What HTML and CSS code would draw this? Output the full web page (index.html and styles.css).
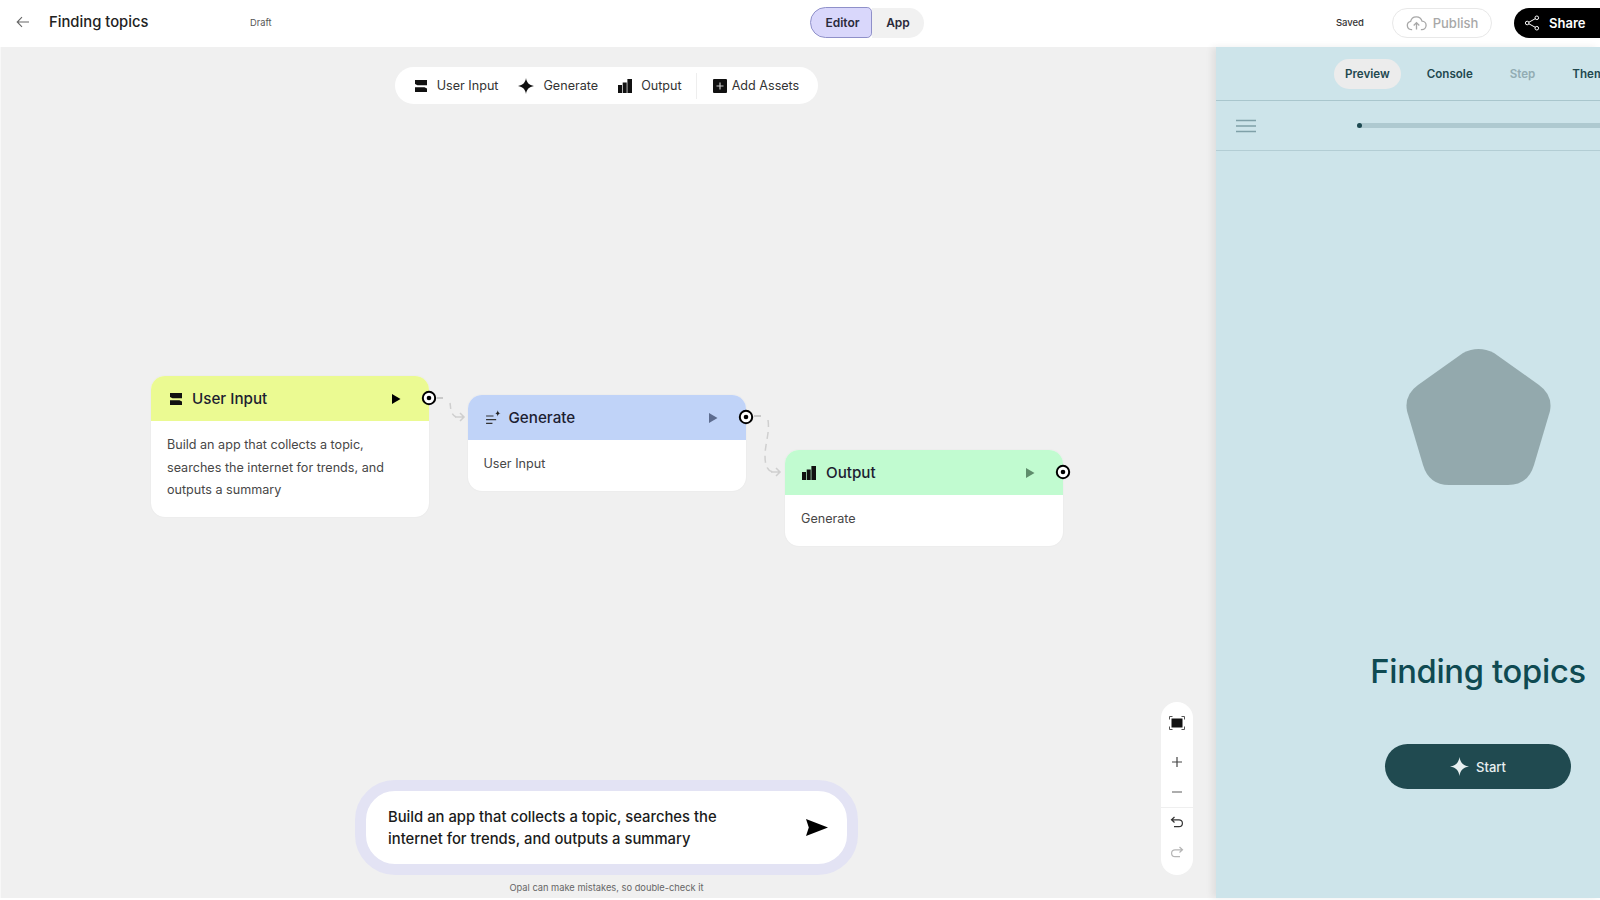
FILE: index.html
```html
<!DOCTYPE html>
<html lang="en">
<head>
<meta charset="utf-8">
<title>Finding topics</title>
<link rel="stylesheet" href="styles.css">
</head>
<body>
<svg class="defs" width="0" height="0" aria-hidden="true">
  <symbol id="i-input" viewBox="0 0 14 14"><path d="M1 1h12v5.200H3.500L1 5zM1 8.200h9.500L13 9.500V13H1z" fill="currentColor"/></symbol>
  <symbol id="i-star" viewBox="0 0 16 16"><path d="M8 0C8.700 4.600 11 7.200 16 8C11 8.800 8.700 11.400 8 16C7.300 11.400 5 8.800 0 8C5 7.200 7.300 4.600 8 0Z" fill="currentColor"/></symbol>
  <symbol id="i-output" viewBox="0 0 14 14"><path d="M0 6h4v8H0zM4.700 3.500h4V14h-4zM9.400 0H14v14H9.400z" fill="currentColor"/></symbol>
  <symbol id="i-play" viewBox="0 0 10 10"><path d="M1 0v10L9.500 5z" fill="currentColor"/></symbol>
  <symbol id="i-port" viewBox="0 0 16 16"><circle cx="8" cy="8" r="6.200" fill="#fff" stroke="#000" stroke-width="2"/><circle cx="8" cy="8" r="2.300" fill="#000"/></symbol>
</svg>

<header class="topbar">
  <div class="top-left">
    <svg class="back" viewBox="0 0 14 12" width="14" height="12"><path d="M13 6H1.500M6 1.200 1.200 6 6 10.800" fill="none" stroke="#666" stroke-width="1.100"/></svg>
    <span class="doc-title">Finding topics</span>
    <span class="draft">Draft</span>
  </div>
  <div class="mode-switch">
    <span class="mode mode-on">Editor</span>
    <span class="mode mode-off">App</span>
  </div>
  <div class="top-right">
    <span class="saved">Saved</span>
    <span class="publish">
      <svg viewBox="0 0 24 18" width="21" height="16"><path d="M7 16.500H6a4.700 4.700 0 0 1-.7-9.300 6.700 6.700 0 0 1 13-.3 4.800 4.800 0 0 1-.3 9.600h-1M12 16.500V9M8.800 11.800 12 8.600l3.200 3.200" fill="none" stroke="#a8a8a8" stroke-width="1.500"/></svg>
      Publish
    </span>
    <span class="share">
      <svg viewBox="0 0 16 16" width="16" height="16"><path d="M12.500 3 3.500 8l9 5" fill="none" stroke="#fff" stroke-width="1"/><circle cx="12.800" cy="2.800" r="1.800" fill="#000" stroke="#fff" stroke-width="1"/><circle cx="3.200" cy="8" r="1.800" fill="#000" stroke="#fff" stroke-width="1"/><circle cx="12.800" cy="13.200" r="1.800" fill="#000" stroke="#fff" stroke-width="1"/></svg>
      Share
    </span>
  </div>
</header>

<main class="workspace">
  <section class="canvas">
    <nav class="toolbar">
      <span class="tool"><svg class="tool-icon" width="14" height="14"><use href="#i-input"/></svg>User Input</span>
      <span class="tool"><svg class="tool-icon" width="16" height="16"><use href="#i-star"/></svg>Generate</span>
      <span class="tool"><svg class="tool-icon" width="14" height="14"><use href="#i-output"/></svg>Output</span>
      <span class="tool-sep"></span>
      <span class="tool tool-add"><svg class="tool-icon" viewBox="0 0 14 14" width="14" height="14"><rect width="14" height="14" rx="1" fill="#111"/><path d="M7 3.500v7M3.500 7h7" stroke="#ccc" stroke-width="1.200"/></svg>Add Assets</span>
    </nav>

    <svg class="edges" width="1213" height="851" viewBox="0 47 1213 851">
      <g fill="none" stroke="#cfcfcf" stroke-width="1.500">
        <path d="M437 398H443" stroke="#bdbdbd"/>
        <path d="M450 403C451 408 450 414 456 417" stroke-dasharray="6 5"/>
        <path d="M455 417H464M460 413l4 4-4 4"/>
        <path d="M754 416H761" stroke="#bdbdbd"/>
        <path d="M768 420C770 432 765 444 765 456C765 466 768 472 774 472" stroke-dasharray="7 5"/>
        <path d="M771 472H780M776 468l4 4-4 4"/>
      </g>
    </svg>

    <article class="node node-input">
      <div class="node-head head-input">
        <svg class="node-icon" width="14" height="14"><use href="#i-input"/></svg>
        <span class="node-name">User Input</span>
        <svg class="node-play play-black" width="10" height="10"><use href="#i-play"/></svg>
      </div>
      <p class="node-body">Build an app that collects a topic, searches the internet for trends, and outputs a summary</p>
      <svg class="port" width="16" height="16"><use href="#i-port"/></svg>
    </article>

    <article class="node node-generate">
      <div class="node-head head-generate">
        <svg class="node-icon icon-gen" viewBox="0 0 16 16" width="17" height="17"><path d="M1 7.500h7M1 11h9.500M1 14.500h6" stroke="#333" stroke-width="1.100" fill="none"/><path d="M12 2c.3 2 1 2.800 3 3-2 .3-2.700 1-3 3-.3-2-1-2.700-3-3 2-.2 2.700-1 3-3z" fill="#222"/></svg>
        <span class="node-name">Generate</span>
        <svg class="node-play play-blue" width="10" height="10"><use href="#i-play"/></svg>
      </div>
      <p class="node-body">User Input</p>
      <svg class="port" width="16" height="16"><use href="#i-port"/></svg>
    </article>

    <article class="node node-output">
      <div class="node-head head-output">
        <svg class="node-icon icon-out" width="14" height="14"><use href="#i-output"/></svg>
        <span class="node-name">Output</span>
        <svg class="node-play play-green" width="10" height="10"><use href="#i-play"/></svg>
      </div>
      <p class="node-body">Generate</p>
      <svg class="port" width="16" height="16"><use href="#i-port"/></svg>
    </article>

    <aside class="zoombar">
      <svg class="zb-frame" viewBox="0 0 16 14" width="16" height="14"><rect x="2.500" y="2.500" width="11" height="9" fill="#111"/><path d="M.5 3.500v-3h3M12.500.5h3v3M15.500 10.500v3h-3M3.500 13.500h-3v-3" fill="none" stroke="#555" stroke-width="1"/></svg>
      <svg class="zb-plus" viewBox="0 0 12 12" width="12" height="12"><path d="M6 1v10M1 6h10" stroke="#444" stroke-width="1.200"/></svg>
      <svg class="zb-minus" viewBox="0 0 12 12" width="12" height="12"><path d="M1 6h10" stroke="#777" stroke-width="1.200"/></svg>
      <span class="zb-sep"></span>
      <svg class="zb-undo" viewBox="0 0 14 12" width="14" height="12"><path d="M4.500 1 1.500 3.800l3 2.700M1.500 3.800h7.500a3.400 3.400 0 0 1 0 6.800H4" fill="none" stroke="#333" stroke-width="1.200"/></svg>
      <svg class="zb-redo" viewBox="0 0 14 12" width="14" height="12"><path d="M9.500 1l3 2.800-3 2.700M12.500 3.800H5a3.400 3.400 0 0 0 0 6.800h5" fill="none" stroke="#b5b5b5" stroke-width="1.200"/></svg>
    </aside>

    <div class="prompt-wrap">
      <div class="prompt">
        <p class="prompt-text">Build an app that collects a topic, searches the internet for trends, and outputs a summary</p>
        <svg class="send" viewBox="0 0 22 17" width="22" height="17"><path d="M0 0 22 8.500 0 17 2.800 8.500z" fill="#000"/></svg>
      </div>
      <p class="disclaimer">Opal can make mistakes, so double-check it</p>
    </div>
  </section>

  <aside class="panel">
    <div class="panel-inner">
      <nav class="tabs">
        <span class="tab tab-on">Preview</span>
        <span class="tab">Console</span>
        <span class="tab tab-dim">Step</span>
        <span class="tab">Theme</span>
      </nav>
      <div class="progress-row">
        <svg class="menu" viewBox="0 0 20 14" width="20" height="14"><path d="M0 1.500h20M0 7h20M0 12.500h20" stroke="#7fa0a8" stroke-width="1.300"/></svg>
        <div class="progress"><span class="progress-dot"></span></div>
      </div>
      <div class="splash">
        <svg class="shape" viewBox="0 0 145 136" width="145" height="136"><path d="M57 4Q72.500-4 88 4L133 36Q147 46 144 62L128 116Q122 136 102 136H43Q23 136 17 116L1 62Q-2 46 12 36Z" fill="#93a9ad"/></svg>
        <h1 class="splash-title">Finding topics</h1>
        <span class="start"><svg width="19" height="19"><use href="#i-star"/></svg>Start</span>
      </div>
    </div>
  </aside>
</main>
</body>
</html>
```
FILE: styles.css
```css
* { box-sizing: border-box; }
html, body { margin: 0; height: 100%; }
body {
  width: 1600px;
  height: 900px;
  overflow: hidden;
  display: flex;
  flex-direction: column;
  padding-bottom: 2px;
  background: #fff;
  color: #1f1f1f;
  font-family: Inter, "Liberation Sans", sans-serif;
}
.defs { position: absolute; }
p, h1 { margin: 0; }

/* top bar */
.topbar {
  flex: 0 0 47px;
  display: grid;
  grid-template-columns: 1fr auto 1fr;
  align-items: center;
  padding-bottom: 2px;
  background: #fff;
}
.top-left { display: flex; align-items: center; padding-left: 16px; }
.back { margin-top: -1px; }
.doc-title { margin-left: 19px; margin-top: -2px; font-size: 14.800px; font-weight: 500; color: #222; width: 201px; }
.draft { font-size: 9.300px; color: #555; }
.mode-switch { display: flex; align-items: center; margin-left: 134px; }
.mode { display: flex; align-items: center; justify-content: center; font-size: 12px; font-weight: 600; color: #2a2a3a; }
.mode-on {
  width: 62px; height: 31px;
  padding-left: 3px;
  background: #d9d7fb;
  border: 1px solid #8f90c9;
  border-radius: 16px 5px 5px 16px;
}
.mode-off {
  width: 52px; height: 30px;
  background: #f1f1f1;
  border-radius: 0 15px 15px 0;
}
.top-right { display: flex; align-items: center; justify-content: flex-end; }
.saved { font-size: 9.500px; font-weight: 500; margin-right: 28px; color: #333; }
.publish {
  display: flex; align-items: center; justify-content: center; gap: 6px;
  width: 100px; height: 30px;
  border: 1px solid #e8e8e8;
  border-radius: 15px;
  font-size: 13px; font-weight: 500;
  color: #a8a8a8;
  margin-right: 22px;
}
.share {
  display: flex; align-items: center; gap: 9px;
  width: 86px; height: 30px;
  padding-left: 10px;
  background: #000;
  color: #fff;
  border-radius: 15px 0 0 15px;
  font-size: 13px; font-weight: 600;
}

/* workspace */
.workspace { flex: 1; display: flex; min-height: 0; }
.canvas {
  position: relative;
  flex: 0 0 1216px;
  display: flex;
  flex-direction: column;
  align-items: center;
  background: #f0f0f0;
  border-left: 1px solid #f8f8f8;
}

.toolbar {
  display: flex; align-items: center;
  height: 37px;
  margin-top: 20px;
  margin-right: 4px;
  padding: 0 19px;
  background: #fff;
  border-radius: 19px;
  font-size: 12.600px;
  color: #333;
}
.tool { display: flex; align-items: center; gap: 9px; white-space: nowrap; }
.tool + .tool { margin-left: 20px; }
.tool-sep + .tool { margin-left: 0; }
.tool-add { gap: 5px; }
.tool-icon { color: #111; flex: none; }
.tool-sep { width: 1px; height: 26px; background: #eee; margin: 0 16px 0 14px; }

/* free canvas: nodes */
.edges { position: absolute; left: -1px; top: 0; }
.node {
  position: absolute;
  width: 278px;
  background: #fff;
  border-radius: 14px;
  box-shadow: 0 0 2px rgba(0,0,0,.06);
}
.node-input { left: 150px; top: 329px; }
.node-generate { left: 466.500px; top: 348px; }
.node-output { left: 784px; top: 403px; }
.node-head {
  display: flex; align-items: center;
  height: 45px;
  padding: 0 28px 0 18px;
  border-radius: 14px 14px 0 0;
}
.head-input { background: #ebfa92; }
.head-generate { background: #c0d3f8; }
.head-output { background: #c1fbd0; }
.node-icon { flex: none; color: #111; margin-right: 9px; }
.icon-gen { margin-left: -1px; margin-right: 7px; margin-top: -2px; }
.icon-out { margin-left: -1px; margin-right: 10px; }
.node-name { flex: 1; font-size: 15.200px; font-weight: 500; color: #1c2030; }
.node-play { flex: none; }
.play-black { color: #000; }
.play-blue { color: #5d6c8f; }
.play-green { color: #5f8d6c; }
.node-body {
  padding: 13px 16px 15px;
  font-size: 12.600px;
  line-height: 22.500px;
  color: #474747;
}
.port { position: absolute; right: -8px; top: 14px; }

.zoombar {
  position: absolute;
  left: 1160px; top: 655px;
  width: 32px; height: 173px;
  display: flex; flex-direction: column; align-items: center;
  background: #fff;
  border-radius: 16px;
}
.zb-frame { margin-top: 14px; }
.zb-plus { margin-top: 26px; }
.zb-minus { margin-top: 18px; }
.zb-sep { width: 100%; height: 1px; background: #efefef; margin-top: 9px; }
.zb-undo { margin-top: 8px; }
.zb-redo { margin-top: 18px; }

/* prompt */
.prompt-wrap {
  position: absolute;
  left: 354px; top: 733px;
  width: 503px;
  display: flex; flex-direction: column; align-items: center;
}
.prompt {
  width: 100%; height: 95px;
  display: flex; align-items: center; justify-content: space-between;
  padding: 0 19px 0 22px;
  background: #fff;
  border: 11px solid #e3e3f4;
  border-radius: 40px;
}
.prompt-text {
  width: 350px;
  font-size: 14.800px;
  font-weight: 500;
  line-height: 22px;
  color: #1b1b1b;
}
.send { flex: none; }
.disclaimer { margin-top: 7px; font-size: 9.300px; color: #666; line-height: 12px; }

/* panel */
.panel {
  flex: 1;
  overflow: hidden;
  background: #cde4ea;
  box-shadow: -4px 0 7px rgba(0,0,0,.07);
  position: relative;
}
.panel-inner { width: 524px; }
.tabs {
  display: flex; align-items: center;
  height: 54px;
  padding: 1px 0 0 118px;
  border-bottom: 1px solid #a9c6cd;
  font-size: 11.600px; font-weight: 600;
  color: #22484f;
}
.tab { display: flex; align-items: center; height: 30px; }
.tab + .tab { margin-left: 37px; }
.tab-on { padding: 0 11px; background: #ececec; border-radius: 15px; margin-right: -11px; }
.tab-dim { color: #92acb3; }
.progress-row {
  display: flex; align-items: center;
  height: 50px;
  padding-left: 20px;
  border-bottom: 1px solid #b3cdd4;
}
.menu { flex: none; }
.progress {
  position: relative;
  width: 400px; height: 5px;
  margin-left: 101px;
  background: #aec9d0;
  border-radius: 2px;
}
.progress-dot {
  position: absolute; left: 0; top: 0;
  width: 5px; height: 5px;
  background: #1e4a52;
  border-radius: 50%;
}
.splash { display: flex; flex-direction: column; align-items: center; padding-top: 198px; }
.shape { display: block; }
.splash-title {
  margin-top: 164px;
  font-size: 32.700px;
  font-weight: 500;
  line-height: 44px;
  color: #0f4a52;
  letter-spacing: -.3px;
}
.start {
  display: flex; align-items: center; justify-content: center; gap: 7px;
  width: 186px; height: 45px;
  margin-top: 51px;
  background: #204a50;
  color: #e8f0f1;
  border-radius: 23px;
  font-size: 13px;
  font-weight: 500;
}
```
